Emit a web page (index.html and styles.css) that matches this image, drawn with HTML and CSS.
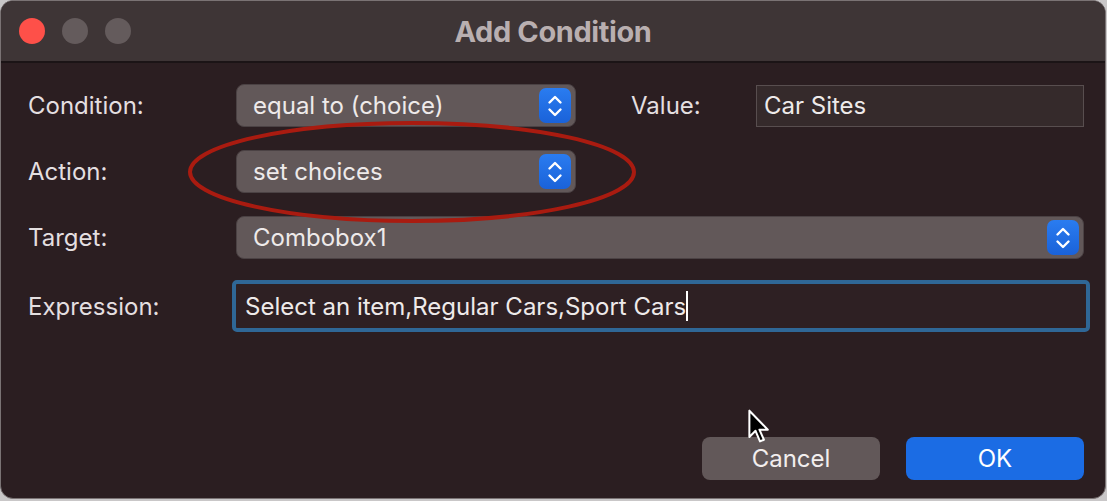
FILE: index.html
```html
<!DOCTYPE html>
<html lang="en">
<head>
    <meta charset="UTF-8">
    <meta name="viewport" content="width=device-width, initial-scale=1.0">
    <title>Add Condition</title>
    <link rel="stylesheet" href="styles.css">
</head>
<body>
    <div class="window">
        <!-- Title bar -->
        <div class="titlebar">
            <div class="lights">
                <span class="light close"></span>
                <span class="light"></span>
                <span class="light"></span>
            </div>
            <div class="title">Add Condition</div>
        </div>

        <!-- Form -->
        <div class="content">
            <div class="row">
                <label class="label">Condition:</label>
                <div class="popup short">
                    <span>equal to (choice)</span>
                    <span class="stepper">
                        <svg width="16" height="26" viewBox="0 0 16 26"><path d="M2.5 9.5 L8 4 L13.5 9.5 M2.5 16.5 L8 22 L13.5 16.5" fill="none" stroke="#fff" stroke-width="2.4" stroke-linecap="round" stroke-linejoin="round"/></svg>
                    </span>
                </div>
                <label class="label value-label">Value:</label>
                <div class="textfield">Car Sites</div>
            </div>

            <div class="row">
                <label class="label">Action:</label>
                <div class="popup short">
                    <span>set choices</span>
                    <span class="stepper">
                        <svg width="16" height="26" viewBox="0 0 16 26"><path d="M2.5 9.5 L8 4 L13.5 9.5 M2.5 16.5 L8 22 L13.5 16.5" fill="none" stroke="#fff" stroke-width="2.4" stroke-linecap="round" stroke-linejoin="round"/></svg>
                    </span>
                </div>
            </div>

            <div class="row">
                <label class="label">Target:</label>
                <div class="popup wide">
                    <span>Combobox1</span>
                    <span class="stepper">
                        <svg width="16" height="26" viewBox="0 0 16 26"><path d="M2.5 9.5 L8 4 L13.5 9.5 M2.5 16.5 L8 22 L13.5 16.5" fill="none" stroke="#fff" stroke-width="2.4" stroke-linecap="round" stroke-linejoin="round"/></svg>
                    </span>
                </div>
            </div>

            <div class="row expr-row">
                <label class="label">Expression:</label>
                <div class="expression">Select an item,Regular Cars,Sport Cars<span class="caret"></span></div>
            </div>

            <div class="buttons">
                <button class="btn cancel">Cancel</button>
                <button class="btn ok">OK</button>
            </div>
        </div>

        <!-- red annotation around the Action popup -->
        <svg class="mark" width="460" height="112" viewBox="0 0 460 112">
            <ellipse cx="230" cy="56" rx="222" ry="49" fill="none" stroke="#a91b10" stroke-width="4"/>
        </svg>

        <!-- mouse pointer -->
        <svg class="pointer" width="26" height="38" viewBox="0 0 22 34">
            <path d="M1.5 1.5 L1.5 25 L7 19.5 L11 29 L14.5 27.5 L10.5 18.5 L18 18.5 Z" fill="#000" stroke="#fff" stroke-width="1.8" stroke-linejoin="round"/>
        </svg>
    </div>
</body>
</html>
```

FILE: styles.css
```css
body {
    margin: 0;
    padding: 0;
    background-color: #c9c7c8;
    font-family: 'Inter', 'Roboto', sans-serif;
}

.window {
    position: relative;
    width: 1104px;
    height: 497px;
    background-color: #2b1e21;
    border: 1px solid #7a7374;
    border-radius: 13px;
    overflow: hidden;
}

.titlebar {
    position: relative;
    height: 60px;
    background-color: #3e3536;
    border-bottom: 2px solid #1b1416;
    display: flex;
    align-items: center;
}

.lights {
    display: flex;
    gap: 17px;
    padding-left: 18px;
}

.light {
    width: 26px;
    height: 26px;
    border-radius: 50%;
    background-color: #645b5c;
}

.light.close {
    background-color: #fe5049;
}

.title {
    position: absolute;
    left: 0;
    right: 0;
    text-align: center;
    font-size: 29px;
    font-weight: bold;
    color: #b9afb0;
    letter-spacing: -0.4px;
}

.content {
    padding: 21px 21px 0 27px;
}

.row {
    display: flex;
    align-items: center;
    margin-bottom: 23px;
}

.expr-row {
    margin-top: -2px;
}

.label {
    width: 208px;
    flex-shrink: 0;
    font-size: 24px;
    color: #e4dfe0;
}

.popup {
    height: 43px;
    box-sizing: border-box;
    border: 1px solid #4b4244;
    border-radius: 8px;
    background-color: #625859;
    display: flex;
    align-items: center;
    justify-content: space-between;
    padding: 0 4px 0 16px;
    font-size: 24px;
    color: #eeeaea;
}

.popup.short {
    width: 340px;
}

.popup.wide {
    width: 848px;
}

.stepper {
    width: 32px;
    height: 35px;
    border-radius: 7px;
    background: linear-gradient(#2a7cf0, #1a62d9);
    display: flex;
    align-items: center;
    justify-content: center;
}

.value-label {
    width: 125px;
    margin-left: 55px;
}

.textfield {
    width: 328px;
    height: 42px;
    box-sizing: border-box;
    border: 1px solid #584e4f;
    background-color: #352a2b;
    padding: 0 7px;
    display: flex;
    align-items: center;
    font-size: 24px;
    color: #eeeaea;
}

.expression {
    width: 858px;
    height: 52px;
    flex-shrink: 0;
    box-sizing: border-box;
    margin-left: -4px;
    border: 4px solid #2f6796;
    border-radius: 5px;
    background-color: #2e2023;
    padding: 0 9px;
    display: flex;
    align-items: center;
    font-size: 24px;
    color: #eeeaea;
}

.caret {
    width: 2px;
    height: 30px;
    background-color: #fff;
}

.buttons {
    display: flex;
    justify-content: flex-end;
    gap: 26px;
    margin-top: 105px;
}

.btn {
    width: 178px;
    height: 43px;
    border: none;
    border-radius: 8px;
    font-family: 'Inter', 'Roboto', sans-serif;
    font-size: 24px;
    color: #f2eeee;
}

.btn.cancel {
    background-color: #625859;
}

.btn.ok {
    background-color: #1b6ce4;
    color: #fff;
}

.mark {
    position: absolute;
    left: 181px;
    top: 115px;
}

.pointer {
    position: absolute;
    left: 746px;
    top: 408px;
}
```
